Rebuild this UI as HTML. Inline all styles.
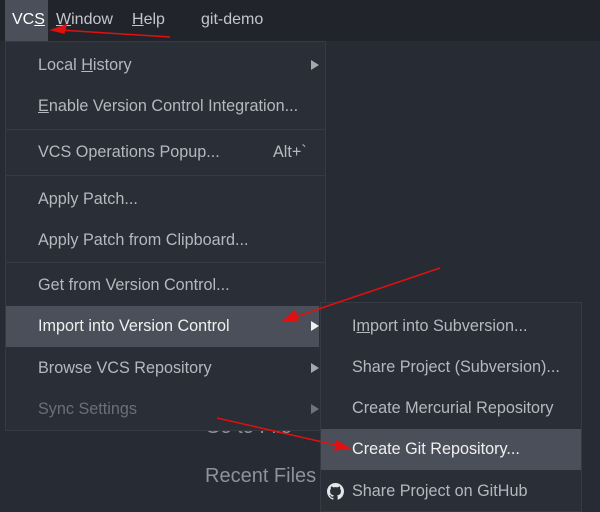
<!DOCTYPE html>
<html><head><style>
*{margin:0;padding:0;box-sizing:border-box}
body{width:600px;height:507px;background:#272b33;font-family:"Liberation Sans",sans-serif;color:#b4b8bf;position:relative;overflow:hidden}
.bar{position:absolute;left:0;top:0;width:600px;height:41px;background:#21252b}
.bar span{position:absolute;top:11px;font-size:16px;color:#c3c6cb}
.vcs{position:absolute;left:5px;top:0;width:43px;height:41px;background:#4b4f59}
.bg{position:absolute;left:205px;font-size:20px;color:#8d929b}
.menu{position:absolute;background:#2a2e36;border:1px solid #363a43}
.it{position:absolute;left:0;right:0;height:41px;font-size:16.2px;line-height:41px}
.it.hl{background:#4b4f59;color:#f0f0f0}
.it.dis{color:#6b6f77}
.sep{position:absolute;left:0;right:0;height:1px;background:#363a43}
.arr{position:absolute;right:6px;top:15px;width:0;height:0;border-left:8px solid #a5a8ad;border-top:5px solid transparent;border-bottom:5px solid transparent}
.hl .arr{border-left-color:#f0f0f0}
.dis .arr{border-left-color:#707379}
u{text-decoration:underline}
</style></head><body>
<div class="bar"></div>
<div class="vcs"></div>
<div class="bar" style="background:none">
<span style="left:12px;color:#fff">VC<u>S</u></span>
<span style="left:56px"><u>W</u>indow</span>
<span style="left:132px"><u>H</u>elp</span>
<span style="left:201px">git-demo</span>
</div>
<div class="bg" style="top:416px">Go to File</div>
<div class="bg" style="top:465px">Recent Files</div>
<div class="menu" style="left:5px;top:41px;width:321px;height:390px">
 <div class="it" style="top:3px;padding-left:32px">Local <u>H</u>istory<i class="arr"></i></div>
 <div class="it" style="top:44px;padding-left:32px"><u>E</u>nable Version Control Integration...</div>
 <div class="sep" style="top:87px"></div>
 <div class="it" style="top:90px;padding-left:32px">VCS Operations Popup...<span style="position:absolute;left:267px">Alt+`</span></div>
 <div class="sep" style="top:133px"></div>
 <div class="it" style="top:137px;padding-left:32px">Apply Patch...</div>
 <div class="it" style="top:178px;padding-left:32px">Apply Patch from Clipboard...</div>
 <div class="sep" style="top:220px"></div>
 <div class="it" style="top:223px;padding-left:32px">Get from Version Control...</div>
 <div class="it hl" style="top:264px;padding-left:32px;right:6px">Import into Version Control<i class="arr" style="right:0"></i></div>
 <div class="it" style="top:306px;padding-left:32px">Browse VCS Repository<i class="arr"></i></div>
 <div class="it dis" style="top:347px;padding-left:32px">Sync Settings<i class="arr"></i></div>
</div>
<div class="menu" style="left:320px;top:302px;width:262px;height:210px">
 <div class="it" style="top:3px;padding-left:31px">I<u>m</u>port into Subversion...</div>
 <div class="it" style="top:44px;padding-left:31px">Share Project (Subversion)...</div>
 <div class="it" style="top:85px;padding-left:31px">Create Mercurial Repository</div>
 <div class="it hl" style="top:126px;padding-left:31px">Create Git Repository...</div>
 <div class="it" style="top:168px;padding-left:31px">Share Project on GitHub</div>
 <svg style="position:absolute;left:6px;top:180px" width="17" height="17" viewBox="0 0 16 16"><path fill="#e6e6e6" d="M8 0C3.58 0 0 3.58 0 8c0 3.54 2.29 6.530 5.47 7.59.4.07.55-.17.55-.38v-1.33c-2.230.48-2.7-1.07-2.7-1.07-.36-.92-.89-1.17-.89-1.170-.73-.5.05-.49.05-.49.8.06 1.23.83 1.23.83.72 1.22 1.87.87 2.33.66.07-.52.28-.87.51-1.07-1.780-.2-3.65-.89-3.65-3.95 0-.87.31-1.59.83-2.15-.08-.2-.36-1.02.08-2.12 0 0 .67-.21 2.2.82a7.6 7.6 0 0 1 4 0c1.53-1.04 2.2-.82 2.2-.82.44 1.1.16 1.92.08 2.12.51.56.82 1.27.82 2.15 0 3.07-1.87 3.75-3.65 3.95.29.25.54.73.54 1.48v2.2c0 .21.15.46.55.38A8 8 0 0 0 16 8c0-4.42-3.58-8-8-8z"/></svg>
</div>
<svg style="position:absolute;left:0;top:0" width="600" height="507">
 <g stroke="#e01010" stroke-width="1.5" fill="#e01010">
  <line x1="170" y1="37" x2="60" y2="30"/><path d="M52 30 L66 25 L64 33 Z"/>
  <line x1="440" y1="268" x2="292" y2="318"/><path d="M283 321 L295 311 L298 320 Z"/>
  <line x1="217" y1="418" x2="340" y2="446"/><path d="M349 448 L335 450 L337 441 Z"/>
 </g>
</svg>
</body></html>
